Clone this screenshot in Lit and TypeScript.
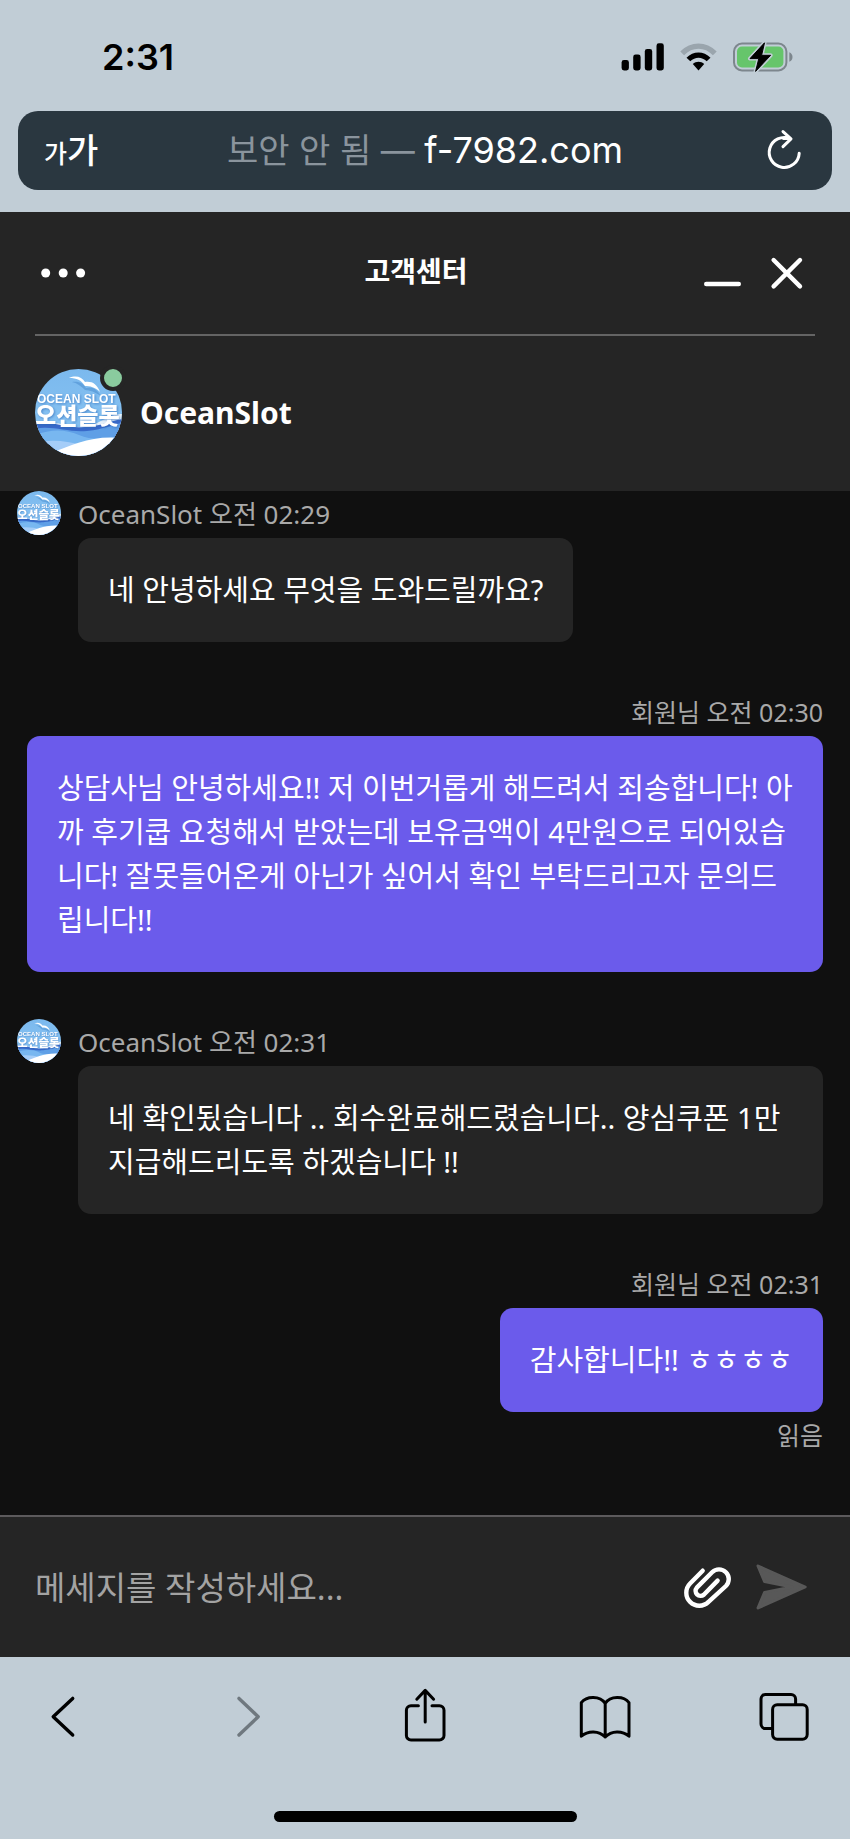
import { LitElement, html, css, svg } from "lit";
import { customElement, property } from "lit/decorators.js";

interface Message {
  from: "agent" | "member";
  name: string;
  time: string;
  text: string;
  read?: boolean;
}

const MESSAGES: Message[] = [
  { from: "agent", name: "OceanSlot", time: "오전 02:29", text: "네 안녕하세요 무엇을 도와드릴까요?" },
  {
    from: "member",
    name: "회원님",
    time: "오전 02:30",
    text: "상담사님 안녕하세요!! 저 이번거롭게 해드려서 죄송합니다! 아까 후기쿱 요청해서 받았는데 보유금액이 4만원으로 되어있습니다! 잘못들어온게 아닌가 싶어서 확인 부탁드리고자 문의드립니다!!",
  },
  {
    from: "agent",
    name: "OceanSlot",
    time: "오전 02:31",
    text: "네 확인됬습니다 .. 회수완료해드렸습니다.. 양심쿠폰 1만 지급해드리도록 하겠습니다 !!",
  },
  { from: "member", name: "회원님", time: "오전 02:31", text: "감사합니다!! ㅎㅎㅎㅎ", read: true },
];

const resets = css`
  :host,
  * {
    box-sizing: border-box;
  }
  button {
    display: block;
    flex: none;
    margin: 0;
    padding: 0;
    border: 0;
    background: none;
    color: inherit;
    font: inherit;
    cursor: pointer;
  }
  svg {
    display: block;
  }
  .line {
    fill: none;
    stroke: currentColor;
    stroke-linecap: round;
    stroke-linejoin: round;
  }
`;

/* Round brand picture: sky, gull, wordmark and layered waves. */
@customElement("brand-avatar")
export class BrandAvatar extends LitElement {
  static styles = css`
    :host {
      display: block;
      flex: none;
      border-radius: 50%;
      overflow: hidden;
    }
    svg {
      display: block;
      width: 100%;
      height: 100%;
    }
    .word {
      fill: #fff;
      filter: drop-shadow(1px 1px 1px rgba(40, 100, 180, 0.6));
    }
    .latin {
      font: 700 12px "Liberation Sans", Arial, sans-serif;
    }
    .hangul {
      font: 900 23px "Noto Sans CJK KR", sans-serif;
    }
  `;

  render() {
    return html`<svg viewBox="0 0 87 87" role="img" aria-label="OCEAN SLOT 오션슬롯">
      <defs>
        <linearGradient id="sky" x1="0" y1="0" x2="0" y2="1">
          <stop offset="0" stop-color="#7bb9ee" />
          <stop offset="1" stop-color="#8cc6f3" />
        </linearGradient>
      </defs>
      <rect width="87" height="87" fill="url(#sky)" />
      <path d="M0 54 C18 50 30 58 46 58 S74 44 87 45 V87 H0Z" fill="#e6f2fb" />
      <path d="M0 52 C18 52 30 60 50 58 S76 52 87 50 V87 H0Z" fill="#3869c9" />
      <path d="M0 60 C16 56 34 64 52 62 S76 56 87 54 V87 H0Z" fill="#5f9fe6" />
      <path d="M0 66 C16 60 30 60 44 66 S74 70 87 66 V87 H0Z" fill="#78b7f0" />
      <path d="M0 74 C16 70 32 72 46 76 L60 87 H0Z" fill="#a5cdf8" />
      <path d="M18 83 C38 76 56 66 87 69 V87 H18Z" fill="#fff" />
      <path d="M37 13 C44 12 48 14 51 19 C57 17 62 20 66 27 C60 23 55 21 50 21 C46 17 42 14 37 13Z" fill="#4488cc" opacity=".5" />
      <path d="M34 9 C41 6 47 8 50 13 C57 12 62 15 65 23 C60 18 55 17 50 17 C46 11 42 9 34 9Z" fill="#fff" />
      <text class="word latin" x="2" y="34">OCEAN SLOT</text>
      <text class="word hangul" x="0" y="55">오션슬롯</text>
    </svg>`;
  }
}

@customElement("status-bar")
export class StatusBar extends LitElement {
  static styles = [
    resets,
    css`
      :host {
        display: flex;
        align-items: center;
        justify-content: space-between;
        height: 111px;
        padding: 2px 57px 0 102px;
      }
      .time {
        font: 600 36px/44px Inter, sans-serif;
        color: #000;
      }
      .signs {
        display: flex;
        align-items: center;
        gap: 16px;
      }
    `,
  ];

  render() {
    return html`
      <time class="time">2:31</time>
      <div class="signs">
        <svg width="43" height="28" viewBox="0 0 43 28" role="img" aria-label="신호">
          <rect x="0.6" y="17" width="7.3" height="10.5" rx="2.4" />
          <rect x="12.2" y="11.6" width="7.4" height="15.9" rx="2.4" />
          <rect x="23.8" y="6" width="7.4" height="21.5" rx="2.4" />
          <rect x="35.5" y="0.3" width="7.3" height="27.2" rx="2.4" />
        </svg>
        <svg width="37" height="28" viewBox="0 0 37 28" role="img" aria-label="와이파이">
          <path d="M0.3 8.6 C10.5 -2.3 26.5 -2.3 36.7 8.6 L32.9 12.2 C24.8 3.6 12.2 3.6 4.1 12.2Z" fill="#9aa5ad" />
          <path d="M6.5 14.7 C13.3 7.6 23.7 7.6 30.5 14.7 L26.7 18.3 C22 13.5 15 13.5 10.3 18.3Z" />
          <path d="M12.8 21 C16 18 21 18 24.2 21 L18.5 27.4Z" />
        </svg>
        <svg width="60" height="30" viewBox="0 0 60 30" role="img" aria-label="배터리 충전 중">
          <rect x="1" y="1.6" width="52.4" height="26.8" rx="8" fill="none" stroke="#7d868d" stroke-width="2" />
          <rect x="4" y="4.6" width="46.4" height="20.8" rx="5" fill="#66c56b" />
          <path d="M56.3 10.2 C60.6 11.6 60.6 18.4 56.3 19.8Z" fill="#7d868d" />
          <path
            d="M31.5 0.8 L17 16.6 H25.8 L22.6 29.4 L37.6 13.3 H28.6Z"
            stroke="#c1cdd6"
            stroke-width="4"
            stroke-linejoin="round"
          />
          <path d="M31.5 0.8 L17 16.6 H25.8 L22.6 29.4 L37.6 13.3 H28.6Z" stroke="#000" stroke-linejoin="round" />
        </svg>
      </div>
    `;
  }
}

@customElement("address-bar")
export class AddressBar extends LitElement {
  static styles = [
    resets,
    css`
      :host {
        display: block;
        padding: 0 18px 22px;
      }
      .bar {
        display: grid;
        grid-template-columns: 1fr auto 1fr;
        align-items: center;
        height: 79px;
        padding: 0 26px;
        border-radius: 20px;
        background: #2a3740;
        color: #fff;
      }
      .size {
        justify-self: start;
        font: 500 34px/48px "Noto Sans CJK KR", sans-serif;
      }
      .small {
        font-size: 25px;
      }
      .url {
        color: #fff;
        text-decoration: none;
        font: 400 36px/48px Inter, "Noto Sans CJK KR", sans-serif;
        white-space: nowrap;
      }
      .insecure {
        color: #8a949d;
        font-size: 34px;
      }
      .reload {
        justify-self: end;
      }
    `,
  ];

  render() {
    return html`<div class="bar">
      <button class="size" aria-label="글자 크기"><span class="small">가</span>가</button>
      <a class="url" href="#"><span class="insecure">보안 안 됨 — </span>f-7982.com</a>
      <button class="reload" aria-label="새로고침">
        <svg width="44" height="44" viewBox="0 0 44 44">
          <path class="line" stroke-width="3" d="M37.2 24.3 A15 15 0 1 1 28 9.6 M21.6 9.4 H28.6 M21 2.6 L29 9.9 L21 17.6" />
        </svg>
      </button>
    </div>`;
  }
}

@customElement("chat-header")
export class ChatHeader extends LitElement {
  static styles = [
    resets,
    css`
      :host {
        display: block;
        padding: 0 35px;
        background: #252525;
        color: #fff;
      }
      .top {
        display: grid;
        grid-template-columns: 1fr auto 1fr;
        align-items: center;
        height: 124px;
        border-bottom: 2px solid #646464;
      }
      .title {
        margin: 0;
        padding: 0 18px 4px 0;
        font: 700 28px/40px "Noto Sans", "Noto Sans CJK KR", sans-serif;
      }
      .actions {
        display: flex;
        justify-self: end;
        gap: 20px;
        padding-right: 6px;
      }
      .profile {
        display: flex;
        align-items: center;
        gap: 18px;
        padding: 33px 0 35px;
      }
      .picture {
        position: relative;
      }
      .face {
        width: 87px;
        height: 87px;
      }
      .online {
        position: absolute;
        top: -4px;
        right: -4px;
        width: 26px;
        height: 26px;
        border: 4px solid #252525;
        border-radius: 50%;
        background: #8acb9e;
      }
      .name {
        margin: 0;
        font: 700 30px/40px "Noto Sans", "Noto Sans CJK KR", sans-serif;
      }
    `,
  ];

  render() {
    return html`
      <div class="top">
        <button aria-label="메뉴">
          <svg width="56" height="44" viewBox="0 0 56 44" fill="currentColor">
            <circle cx="10.7" cy="22" r="4.5" />
            <circle cx="28.2" cy="22" r="4.5" />
            <circle cx="45.6" cy="22" r="4.5" />
          </svg>
        </button>
        <h1 class="title">고객센터</h1>
        <div class="actions">
          <button aria-label="최소화">
            <svg width="44" height="44" viewBox="0 0 44 44">
              <path class="line" stroke-width="4.6" d="M5.3 33 H37.7" />
            </svg>
          </button>
          <button aria-label="닫기">
            <svg width="44" height="44" viewBox="0 0 44 44">
              <path class="line" stroke-width="4.4" d="M8.6 9 L35 35.4 M35 9 L8.6 35.4" />
            </svg>
          </button>
        </div>
      </div>
      <div class="profile">
        <div class="picture">
          <brand-avatar class="face"></brand-avatar>
          <span class="online"></span>
        </div>
        <h2 class="name">OceanSlot</h2>
      </div>
    `;
  }
}

@customElement("chat-message")
export class ChatMessage extends LitElement {
  @property({ attribute: false }) message!: Message;

  static styles = [
    resets,
    css`
      :host {
        display: block;
        font: 400 29px/44px "Noto Sans", "Noto Sans CJK KR", sans-serif;
      }
      .row {
        display: grid;
        grid-template-columns: 44px minmax(0, 1fr);
        column-gap: 17px;
      }
      .row.member {
        grid-template-columns: minmax(0, 1fr);
        justify-items: end;
        padding-left: 10px;
      }
      .face {
        width: 44px;
        height: 44px;
      }
      .meta {
        margin: 0;
        font-size: 26px;
        line-height: 47px;
        color: #a9a9a9;
      }
      .bubble {
        margin: 0;
        padding: 30px;
        border-radius: 13px;
        background: #252525;
        color: #fff;
      }
      .agent .bubble {
        grid-column: 2;
        justify-self: start;
      }
      .member .bubble {
        background: #6b5beb;
      }
      .member .meta {
        font-size: 25px;
      }
    `,
  ];

  render() {
    const { from, name, time, text, read } = this.message;
    return html`<article class="row ${from}">
      ${from === "agent" ? html`<brand-avatar class="face"></brand-avatar>` : null}
      <p class="meta">${name} ${time}</p>
      <p class="bubble">${text}</p>
      ${read ? html`<p class="meta">읽음</p>` : null}
    </article>`;
  }
}

@customElement("chat-composer")
export class ChatComposer extends LitElement {
  static styles = [
    resets,
    css`
      :host {
        display: block;
        border-top: 2px solid #5c5a5c;
        background: #252525;
        color: #fff;
      }
      .form {
        display: flex;
        align-items: center;
        gap: 24px;
        height: 140px;
        padding: 0 42px 0 35px;
      }
      .field {
        flex: 1;
        min-width: 0;
        height: 60px;
        padding: 0;
        border: 0;
        outline: 0;
        background: none;
        color: #fff;
        font: 400 33px/48px "Noto Sans", "Noto Sans CJK KR", sans-serif;
      }
      .field::placeholder {
        color: #a3a3a3;
        opacity: 1;
      }
      .send {
        color: #585858;
      }
    `,
  ];

  render() {
    return html`<form class="form" @submit=${(e: Event) => e.preventDefault()}>
      <input class="field" type="text" aria-label="메세지" placeholder="메세지를 작성하세요..." />
      <button type="button" aria-label="파일 첨부">
        <svg width="48" height="48" viewBox="0 0 48 48">
          <path
            class="line"
            stroke-width="4.4"
            d="M18.7 7.7 L6.1 20.5 A13 13 0 0 0 24.5 38.9 L41.9 23 A9.7 9.7 0 0 0 28.1 9.2 L12.8 24.6 A5 5 0 0 0 19.8 31.7 L33.6 17.6"
          />
        </svg>
      </button>
      <button class="send" aria-label="보내기">
        <svg width="52" height="48" viewBox="0 0 52 48">
          <path
            d="M2 3 L49.2 24 L2 45 L8.6 29.4 L36 24 L8.6 18.6Z"
            fill="currentColor"
            stroke="currentColor"
            stroke-width="3"
            stroke-linejoin="round"
          />
        </svg>
      </button>
    </form>`;
  }
}

const TOOLS = [
  { label: "뒤로", off: false, art: svg`<path class="line" stroke-width="3.4" d="M32.7 11.4 L13.2 29.7 L32.7 48" />` },
  { label: "앞으로", off: true, art: svg`<path class="line" stroke-width="3.4" d="M19 11.4 L38.2 29.7 L19 48" />` },
  {
    label: "공유",
    off: false,
    art: svg`<path class="line" stroke-width="3" d="M19.4 18.7 H12 a4.6 4.6 0 0 0 -4.6 4.6 V48.4 a4.6 4.6 0 0 0 4.6 4.6 H40.4 a4.6 4.6 0 0 0 4.6 -4.6 V23.3 a4.6 4.6 0 0 0 -4.6 -4.6 H33 M26.2 35 V3.6 M17.8 12.2 L26.2 3.4 L34.6 12.2" />`,
  },
  {
    label: "책갈피",
    off: false,
    art: svg`<path class="line" stroke-width="3" d="M26.2 16.4 C21 8.6 7.6 8.8 2.3 15.6 V49.2 C9 43.4 20 43.4 26.2 50 C32.4 43.4 43.4 43.4 50 49.2 V15.6 C44.8 8.8 31.4 8.6 26.2 16.4 V50" />`,
  },
  {
    label: "탭",
    off: false,
    art: svg`<rect class="line" stroke-width="3" x="14.6" y="17.8" width="34.6" height="34.4" rx="4.6" />
      <path class="line" stroke-width="3" d="M37.6 17.4 V12 a4.6 4.6 0 0 0 -4.6 -4.6 H7.6 a4.6 4.6 0 0 0 -4.6 4.6 V37 a4.6 4.6 0 0 0 4.6 4.6 H14" />`,
  },
];

@customElement("browser-toolbar")
export class BrowserToolbar extends LitElement {
  static styles = [
    resets,
    css`
      :host {
        display: block;
        padding: 30px 40px 17px;
        background: #c1cdd6;
        color: #000;
      }
      .tools {
        display: flex;
        justify-content: space-between;
      }
      .tools button:disabled {
        color: #6f787f;
      }
      .home {
        width: 303px;
        height: 11px;
        margin: 64px auto 0;
        border-radius: 6px;
        background: #000;
      }
    `,
  ];

  render() {
    return html`
      <nav class="tools">
        ${TOOLS.map(
          (t) => html`<button aria-label=${t.label} ?disabled=${t.off}>
            <svg width="52" height="60" viewBox="0 0 52 60">${t.art}</svg>
          </button>`
        )}
      </nav>
      <div class="home"></div>
    `;
  }
}

@customElement("app-root")
export class AppRoot extends LitElement {
  static styles = css`
    :host {
      display: flex;
      flex-direction: column;
      min-height: 100vh;
      background: #101010;
    }
    .chrome {
      background: #c1cdd6;
    }
    .messages {
      display: flex;
      flex: 1;
      flex-direction: column;
      gap: 47px;
      padding: 0 27px 47px 17px;
    }
  `;

  render() {
    return html`
      <header class="chrome">
        <status-bar></status-bar>
        <address-bar></address-bar>
      </header>
      <chat-header></chat-header>
      <main class="messages">
        ${MESSAGES.map((m) => html`<chat-message .message=${m}></chat-message>`)}
      </main>
      <chat-composer></chat-composer>
      <browser-toolbar></browser-toolbar>
    `;
  }
}
